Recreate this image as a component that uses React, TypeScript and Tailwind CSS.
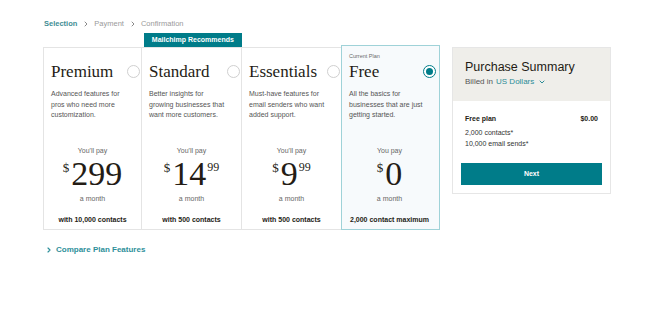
import { ChevronRight, ChevronDown } from "lucide-react"

// ─────────────────────────────────────────────────────────────
// Plan data
// ─────────────────────────────────────────────────────────────

type Plan = {
  name: string
  desc: string[]
  payLabel: string
  dollars: string
  cents?: string
  contacts: string
  current?: boolean
  recommended?: boolean
}

const PLANS: Plan[] = [
  {
    name: "Premium",
    desc: ["Advanced features for", "pros who need more", "customization."],
    payLabel: "You'll pay",
    dollars: "299",
    contacts: "with 10,000 contacts",
  },
  {
    name: "Standard",
    desc: ["Better insights for", "growing businesses that", "want more customers."],
    payLabel: "You'll pay",
    dollars: "14",
    cents: "99",
    contacts: "with 500 contacts",
    recommended: true,
  },
  {
    name: "Essentials",
    desc: ["Must-have features for", "email senders who want", "added support."],
    payLabel: "You'll pay",
    dollars: "9",
    cents: "99",
    contacts: "with 500 contacts",
  },
  {
    name: "Free",
    desc: ["All the basics for", "businesses that are just", "getting started."],
    payLabel: "You pay",
    dollars: "0",
    contacts: "2,000 contact maximum",
    current: true,
  },
]

const sans = "font-['Liberation_Sans',Arial,sans-serif]"
const serif = "font-['Liberation_Serif','Times_New_Roman',serif]"

function Radio({ checked }: { checked?: boolean }) {
  return checked ? (
    <span className="flex h-[13px] w-[13px] items-center justify-center rounded-full border border-[#007c89] bg-white">
      <span className="h-[7px] w-[7px] rounded-full bg-[#007c89]" />
    </span>
  ) : (
    <span className="h-[13px] w-[13px] rounded-full border border-[#cfcfcf] bg-white" />
  )
}

function PlanCard({ plan }: { plan: Plan }) {
  return (
    <div
      className={
        plan.current
          ? "-mt-[2px] flex flex-col border-[1.5px] border-[#9fd2d8] bg-[#f7fafc] pl-[7px] pr-[3px] pt-[2px] pb-[3px]"
          : "flex flex-col border-y border-l border-[#e4e4e4] bg-white pl-[7px] pr-[1px] pb-[4px]"
      }
    >
      {/* top label row */}
      <div className="flex h-[15px] items-center pt-[3px]">
        {plan.current && (
          <span className="-mt-[2px] text-[5.5px] leading-[8px] text-[#6b6b6b]">Current Plan</span>
        )}
      </div>

      {/* title + radio */}
      <div className="flex items-center justify-between">
        <span className={`${serif} text-[17px] leading-[17px] text-[#241c15]`}>{plan.name}</span>
        <Radio checked={plan.current} />
      </div>

      <div className="mt-[9px] h-[32px] text-[7px] leading-[10.5px] text-[#555]">
        {plan.desc.map((l) => (
          <div key={l}>{l}</div>
        ))}
      </div>

      {/* price block */}
      <div className="mt-[25px] flex flex-col items-center pr-[6px]">
        <span className="text-[7px] leading-[10px] text-[#666]">{plan.payLabel}</span>
        <div className={`${serif} mt-[3px] flex h-[30px] items-start text-[#241c15]`}>
          <span className="mr-[2px] mt-[2px] text-[13px] leading-[13px]">$</span>
          <span className="text-[34px] leading-[30px]">{plan.dollars}</span>
          {plan.cents && (
            <span className="ml-[1px] mt-[2px] text-[12px] leading-[12px]">{plan.cents}</span>
          )}
        </div>
        <span className="mt-[5px] text-[7px] leading-[10px] text-[#666]">a month</span>
        <span className="mt-[11px] text-[7px] font-bold leading-[10px] text-[#241c15]">
          {plan.contacts}
        </span>
      </div>
    </div>
  )
}

export default function App() {
  return (
    <div className={`${sans} h-[334px] w-[645px] overflow-hidden bg-white pl-[43px] pt-[19px]`}>
      {/* ── Breadcrumb ── */}
      <div className="flex h-[10px] items-center text-[7.5px] leading-[10px]">
        <span className="ml-px font-bold text-[#3d8d94]">Selection</span>
        <ChevronRight size={8} strokeWidth={3} className="ml-[5px] mr-[4px] text-[#8a8a8a]" />
        <span className="text-[#9a9a9a]">Payment</span>
        <ChevronRight size={8} strokeWidth={3} className="ml-[5px] mr-[4px] text-[#8a8a8a]" />
        <span className="text-[#9a9a9a]">Confirmation</span>
      </div>

      <div className="mt-[4px] flex items-start gap-[12px]">
        {/* ── Plans ── */}
        <div className="w-[397px]">
          <div className="grid h-[14px] grid-cols-4">
            <div />
            <div className="ml-[2px] flex items-center justify-center bg-[#007c89] text-[7px] font-bold text-white">
              Mailchimp Recommends
            </div>
            <div />
            <div />
          </div>
          <div className="grid grid-cols-[98px_100px_100px_99px]">
            {PLANS.map((p) => (
              <PlanCard key={p.name} plan={p} />
            ))}
          </div>

          <div className="mt-[14px] flex items-center pl-[2px] text-[8px] font-bold text-[#2d8f9a]">
            <ChevronRight size={8} strokeWidth={3.5} className="mr-[3px]" />
            Compare Plan Features
          </div>
        </div>

        {/* ── Purchase summary ── */}
        <div className="mt-[14px] w-[159px] border border-[#e6e6e6]">
          <div className="h-[53px] bg-[#efeeea] px-[12px] pt-[12px]">
            <div className="text-[12.5px] leading-[15px] text-[#241c15]">Purchase Summary</div>
            <div className="mt-[1px] flex items-center text-[8px] leading-[12px] text-[#555]">
              Billed in
              <span className="ml-[3px] text-[#2b8c97]">US Dollars</span>
              <ChevronDown size={8} strokeWidth={3} className="ml-[4px] text-[#2b8c97]" />
            </div>
          </div>
          <div className="px-[8px] pb-[8px] pt-[12px]">
            <div className="px-[4px] text-[7px] leading-[11px] text-[#333]">
              <div className="flex justify-between font-bold text-[#241c15]">
                <span>Free plan</span>
                <span>$0.00</span>
              </div>
              <div className="mt-[3px]">2,000 contacts*</div>
              <div>10,000 email sends*</div>
            </div>
            <button
              type="button"
              className="mt-[14px] flex h-[22px] w-full items-center justify-center bg-[#007c89] text-[7px] font-bold text-white"
            >
              Next
            </button>
          </div>
        </div>
      </div>
    </div>
  )
}
